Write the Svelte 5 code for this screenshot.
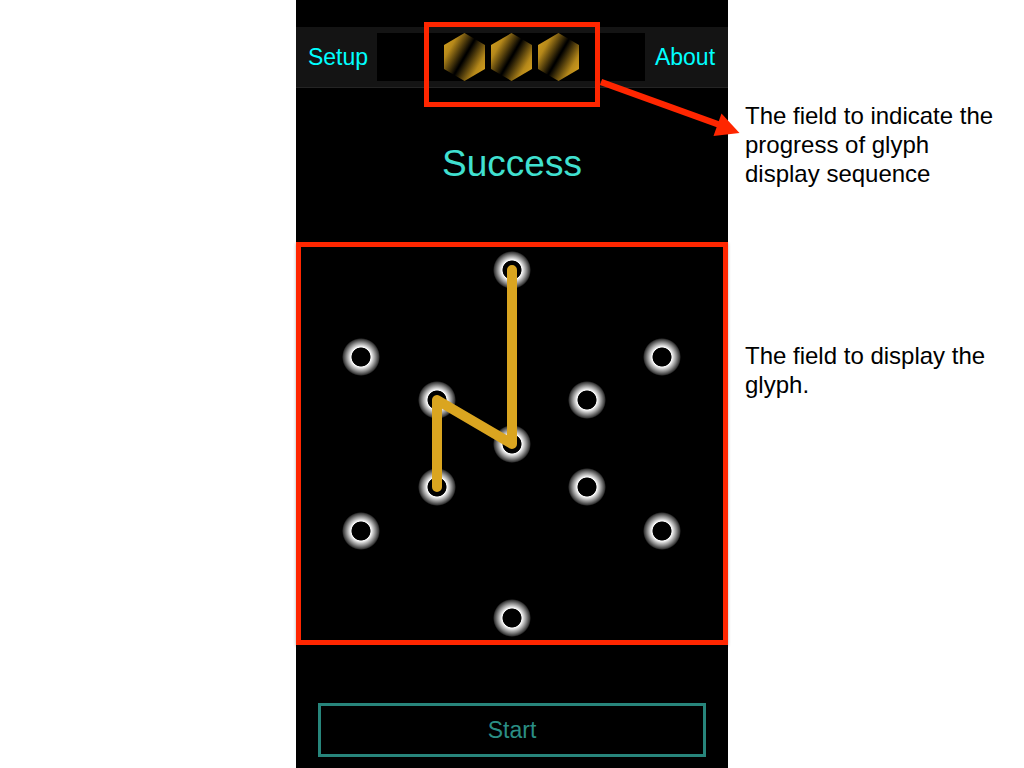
<script>
  const dots = [
    [211, 23], [60, 110], [361, 110], [136, 153], [286, 153], [211, 197],
    [136, 240], [286, 240], [60, 284], [361, 284], [211, 371]
  ];
  const path = [[211, 23], [211, 197], [136, 153], [136, 240]];
  const steps = [1, 2, 3];
</script>

<main class="page">
  <div class="phone">
    <nav class="bar">
      <button class="link">Setup</button>
      <div class="field">
        <div class="sequence">
          {#each steps as step}
            <svg class="hex" width="41" height="48" viewBox="0 0 41 48" aria-hidden="true">
              <defs>
                <linearGradient id="gold{step}" gradientUnits="userSpaceOnUse" x1="0" y1="12" x2="41" y2="36">
                  <stop offset="0" stop-color="#cb991e" />
                  <stop offset="0.15" stop-color="#b5881a" />
                  <stop offset="0.49" stop-color="#000" />
                  <stop offset="0.51" stop-color="#000" />
                  <stop offset="0.85" stop-color="#b5881a" />
                  <stop offset="1" stop-color="#cf9c1e" />
                </linearGradient>
              </defs>
              <polygon points="20.5,0 41,12 41,36 20.5,48 0,36 0,12" fill="url(#gold{step})" />
            </svg>
          {/each}
          <div class="frame">
            <svg class="arrow" width="142" height="62" viewBox="0 0 142 62" aria-hidden="true">
              <path d="M1 5L120 48" stroke="#ff2600" stroke-width="6.5" />
              <polygon points="139.5,56 121.5,36.5 113.5,59" fill="#ff2600" />
            </svg>
          </div>
        </div>
      </div>
      <button class="link">About</button>
    </nav>

    <h1>Success</h1>

    <section class="board">
      <svg viewBox="0 0 422 393" aria-hidden="true">
        <defs>
          <radialGradient id="glow">
            <stop offset="0.48" stop-color="#000" />
            <stop offset="0.52" stop-color="#fff" />
            <stop offset="0.75" stop-color="#949494" />
            <stop offset="0.93" stop-color="#3c3c3c" />
            <stop offset="1" stop-color="#000" />
          </radialGradient>
        </defs>
        {#each dots as [x, y]}
          <circle cx={x} cy={y} r="19" fill="url(#glow)" />
        {/each}
        <polyline
          points={path.map((p) => p.join(',')).join(' ')}
          fill="none" stroke="#daa520" stroke-width="10"
          stroke-linecap="round" stroke-linejoin="round"
        />
      </svg>
    </section>

    <button class="start">Start</button>
  </div>

  <aside class="notes">
    <p>The field to indicate the progress of glyph display sequence</p>
    <p>The field to display the glyph.</p>
  </aside>
</main>

<style>
  :global(body) {
    background: #fff;
  }
  .page {
    display: grid;
    grid-template-columns: 296fr 432fr 296fr;
    min-height: 100vh;
    font-family: "Liberation Sans", Arial, sans-serif;
    font-size: 24px;
    line-height: 29px;
    color: #000;
  }
  .phone {
    grid-column: 2;
    display: flex;
    flex-direction: column;
    min-width: 0;
    box-sizing: border-box;
    padding: 27px 0 11px;
    background: #000;
  }
  button {
    padding: 0;
    border: 0;
    background: none;
    font: inherit;
    font-size: 23px;
    cursor: pointer;
  }
  .bar {
    display: grid;
    grid-template-columns: 81px 1fr 83px;
    padding: 6px 0;
    background: #141414;
    border-bottom: 1px solid #242424;
  }
  .link {
    color: #00ffff;
  }
  .link:first-child {
    padding-left: 3px;
  }
  .link:last-child {
    padding-right: 3px;
  }
  .field {
    display: flex;
    justify-content: center;
    background: #000;
  }
  .sequence {
    position: relative;
    display: flex;
    gap: 6px;
  }
  .hex {
    display: block;
  }
  .frame {
    position: absolute;
    inset: -11px -21px -26px -20px;
    border: 5px solid #ff2600;
    z-index: 1;
  }
  .arrow {
    position: absolute;
    left: 100%;
    top: 50px;
    margin-left: 5px;
  }
  h1 {
    margin: 53px 0 55px;
    font-size: 37px;
    line-height: 46px;
    font-weight: 400;
    text-align: center;
    color: #40e0d0;
  }
  .board {
    border: 5px solid #ff2600;
    box-shadow: 0 1px 3px rgba(0, 0, 0, 0.3);
  }
  .board svg {
    display: block;
    width: 100%;
  }
  .start {
    height: 54px;
    margin: auto 22px 0;
    border: 3px solid #27857b;
    color: #2a8e84;
  }
  .notes {
    display: flex;
    flex-direction: column;
    gap: 153px;
    padding: 101px 16px 0 17px;
  }
  .notes p {
    margin: 0;
  }
</style>
